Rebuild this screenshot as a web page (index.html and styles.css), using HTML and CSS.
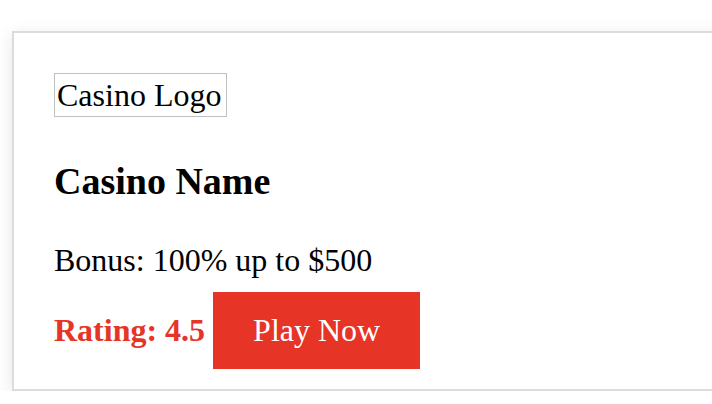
FILE: index.html
```html
<!DOCTYPE html>
<html>
<head>
<meta charset="utf-8">
<link rel="stylesheet" href="styles.css">
</head>
<body>
<div class="card">
  <div class="logo-wrap"><span class="logo">Casino Logo</span></div>
  <h3 class="name">Casino Name</h3>
  <p class="bonus">Bonus: 100% up to $500</p>
  <div class="row">
    <span class="rating">Rating: 4.5</span>
    <a class="play" href="#">Play Now</a>
  </div>
</div>
</body>
</html>
```
FILE: styles.css
```css
html, body {
  margin: 0;
  padding: 0;
  overflow: hidden;
  background: #fff;
}
body {
  font-family: "Liberation Serif", "Times New Roman", serif;
  font-size: 32px;
  color: #000;
}
.card {
  margin: 31px 0 0 12px;
  width: 800px;
  border: 2px solid #dcdcdc;
  padding: 40px 40px 20px;
  box-shadow: 0 4px 16px rgba(0, 0, 0, 0.1);
  background: #fff;
}
.logo-wrap {
  display: flex;
}
.logo {
  display: block;
  border: 1px solid #c0c0c0;
  height: 42px;
  line-height: 42px;
  padding: 0 5px 0 2px;
}
.name {
  font-size: 38px;
  font-weight: bold;
  margin: 42px 0 39px;
}
.bonus {
  margin: 0 0 13px;
}
.row {
  display: flex;
  align-items: center;
  gap: 8px;
}
.rating {
  color: #e63426;
  font-weight: bold;
}
.play {
  display: block;
  background: #e63426;
  color: #fff;
  text-decoration: none;
  padding: 20px 40px;
}
```
